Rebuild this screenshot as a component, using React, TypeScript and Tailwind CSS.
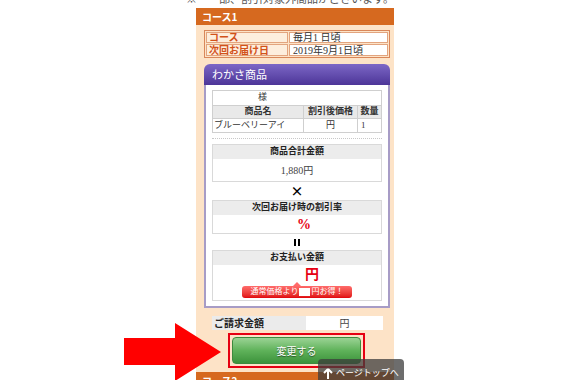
import React from 'react';

const serif = "font-['Liberation_Serif','Noto_Sans_CJK_JP',serif]";
const sans = "font-['Noto_Sans_CJK_JP',sans-serif]";

function CalcBox({ title, children, bodyClass }: { title: string; children: React.ReactNode; bodyClass: string }) {
  return (
    <div className="border border-[#d9d9d9] bg-white">
      <div className={`flex h-[14px] items-center justify-center bg-[#ececec] text-[9px] font-bold text-[#222] ${serif}`}>
        {title}
      </div>
      <div className={bodyClass}>{children}</div>
    </div>
  );
}

export default function App() {
  return (
    <div className={`relative h-[380px] w-[570px] overflow-hidden bg-white ${sans}`}>
      {/* cut-off note above the course panel */}
      <div className="h-[8px] overflow-hidden pl-[186px]">
        <p className={`-mt-[7px] text-[11px] leading-[13px] text-[#555] ${serif}`}>※　一部、割引対象外商品がございます。</p>
      </div>

      <div className="ml-[196px] w-[198px] bg-[#fde3c7]">
        <div className="flex h-[17px] items-center bg-[#d6691f] pl-[6px] text-[10px] font-bold text-white">コース1</div>

        <div className="pl-[8px] pr-[4px] pt-[5px]">
          {/* course table */}
          <div className={`border border-[#d9875a] p-[1px] text-[10px] ${serif}`}>
            <div className="flex h-[11px]">
              <div className="flex w-[82px] items-center border border-[#e2a47e] bg-[#fdeedd] pl-[2px] font-bold text-[#d2521a]">コース</div>
              <div className="ml-[1px] flex flex-1 items-center border border-[#e2a47e] bg-white pl-[3px] text-[#333]">毎月1 日頃</div>
            </div>
            <div className="mt-[1px] flex h-[12px]">
              <div className="flex w-[82px] items-center border border-[#e2a47e] bg-[#fdeedd] pl-[2px] font-bold text-[#d2521a]">次回お届け日</div>
              <div className="ml-[1px] flex flex-1 items-center border border-[#e2a47e] bg-white pl-[3px] text-[#333]">2019年9月1日頃</div>
            </div>
          </div>

          {/* product box */}
          <div className="mt-[6px]">
            <div className="flex h-[21px] items-center rounded-t-[6px] bg-gradient-to-b from-[#7d67c6] to-[#4d3598] pl-[8px] text-[11px] text-white">
              わかさ商品
            </div>
            <div className="border-x-2 border-b-2 border-[#a79cc6] bg-white px-[6px] pb-[5px] pt-[5px]">
              <div className={`border border-[#cfcfcf] text-[9px] text-[#333] ${serif}`}>
                <div className="flex h-[14px] items-center pl-[45px]">様</div>
                <div className="flex h-[13px] border-t border-[#cfcfcf] bg-[#e9e9e9] font-bold">
                  <div className="flex w-[90px] items-center justify-center">商品名</div>
                  <div className="flex w-[54px] items-center justify-center border-l border-[#cfcfcf]">割引後価格</div>
                  <div className="flex flex-1 items-center justify-center border-l border-[#cfcfcf]">数量</div>
                </div>
                <div className="flex h-[14px] border-t border-[#cfcfcf]">
                  <div className="flex w-[90px] items-center pl-[1px]">ブルーベリーアイ</div>
                  <div className="flex w-[54px] items-center justify-center border-l border-[#cfcfcf]">円</div>
                  <div className="flex flex-1 items-center border-l border-[#cfcfcf] pl-[3px]">1</div>
                </div>
              </div>

              <div className="mt-[5px] border-t border-dotted border-[#c8c8c8]" />

              <div className="mt-[5px]">
                <CalcBox title="商品合計金額" bodyClass={`flex h-[22px] items-center justify-center text-[10px] text-[#444] ${serif}`}>
                  1,880円
                </CalcBox>
              </div>
              <div className="flex h-[18px] items-center justify-center text-[13px] font-bold text-black">×</div>
              <CalcBox title="次回お届け時の割引率" bodyClass={`flex h-[18px] items-center justify-center pl-[14px] text-[14px] font-bold text-[#e60012] ${serif}`}>
                %
              </CalcBox>
              <div className="flex h-[16px] items-center justify-center">
                <div className="flex gap-[2px]">
                  <span className="h-[7px] w-[2px] bg-black" />
                  <span className="h-[7px] w-[2px] bg-black" />
                </div>
              </div>
              <CalcBox title="お支払い金額" bodyClass="flex h-[35px] flex-col items-center">
                <div className={`flex h-[18px] items-center pl-[30px] text-[14px] font-bold text-[#e60012] ${serif}`}>円</div>
                <div className="relative mt-[3px] flex h-[12px] w-[110px] items-center justify-center rounded-[3px] bg-gradient-to-b from-[#ff6a6a] to-[#e0000a] text-[8px] text-white">
                  <span className="absolute -top-[4px] left-[51px] h-0 w-0 border-x-[4px] border-b-[4px] border-x-transparent border-b-[#ff6a6a]" />
                  <span className={serif}>通常価格より</span>
                  <span className="mx-[1px] h-[8px] w-[11px] bg-white" />
                  <span className={serif}>円お得！</span>
                </div>
              </CalcBox>
            </div>
          </div>

          {/* billing row */}
          <div className={`mt-[8px] flex h-[14px] text-[10px] ${serif}`}>
            <div className="ml-[8px] flex w-[94px] items-center bg-[#ebebeb] pl-[2px] font-bold text-[#222]">ご請求金額</div>
            <div className="flex w-[77px] items-center justify-center bg-white text-[#444]">円</div>
          </div>

          {/* submit button */}
          <div className="ml-[24px] mt-[3px] w-[137px] border-2 border-[#e60012] p-[2px]">
            <div className="flex h-[27px] items-center justify-center rounded-[4px] border border-[#3d8a3d] bg-gradient-to-b from-[#9ad394] via-[#5fb25a] to-[#3c933b] text-[10px] text-white [text-shadow:0_1px_1px_rgba(0,0,0,0.5)]">
              変更する
            </div>
          </div>
        </div>

        <div className="mt-[4px] flex h-[17px] items-center bg-[#d6691f] pl-[6px] text-[10px] font-bold text-white">コース2</div>
      </div>

      {/* annotation arrow */}
      <svg className="absolute left-0 top-0" width="570" height="380" viewBox="0 0 570 380">
        <polygon points="124,338 175,338 175,323 221,352 175,381 175,365 124,365" fill="#ff0000" />
      </svg>

      {/* page top button */}
      <div className="absolute left-[318px] top-[359px] flex h-[26px] w-[86px] items-center gap-[3px] rounded-[4px] bg-[rgba(60,60,60,0.75)] pl-[5px] pt-[2px] text-[9px] text-white">
        <svg width="10" height="11" viewBox="0 0 10 11">
          <path d="M5 1 L1 5 M5 1 L9 5 M5 1 L5 11" stroke="#fff" strokeWidth="2" fill="none" />
        </svg>
        <span>ページトップへ</span>
      </div>
    </div>
  );
}
